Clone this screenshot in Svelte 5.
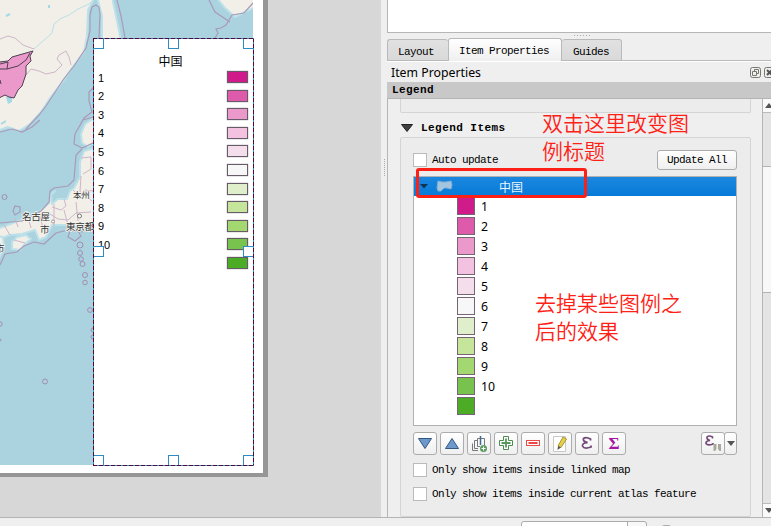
<script>
  const legend = [
    ['1', '#d01c8b'], ['2', '#de5aaa'], ['3', '#ea99ca'], ['4', '#f2c2e0'],
    ['5', '#f5deec'], ['6', '#f7f7f7'], ['7', '#dfeecb'], ['8', '#c5e69a'],
    ['9', '#a3d871'], ['10', '#78c34d'], ['', '#4dac26']
  ];
  const handles = [[0, 0], [75, 0], [150, 0], [0, 208], [150, 208], [0, 417], [75, 417], [150, 417]];
  const islets = [[80, 245, 3], [80, 253, 2.5], [81, 259, 2.3], [82.5, 264, 2.5], [85, 275, 2.5], [85, 282.5, 2.3], [90, 310, 2.4], [93, 330, 2], [93, 337, 2], [45, 381.5, 2.5], [4.5, 197, 2.5], [0, 324, 2.2], [0, 340, 1]];
  const tools = ['down', 'up', 'group', 'add', 'remove', 'edit', 'expr', 'sum'];
</script>

<div class="window">
  <div class="main">
    <section class="canvas">
      <div class="paper">
        <svg class="map" width="253" height="465" viewBox="0 0 253 465">
          <rect width="253" height="465" fill="#aad3df" />
          <g fill="#f2efe9" stroke="#bce1e9" stroke-width="2" stroke-linejoin="round">
            <path d="M-3-3H95L88 10 87 36 84 52 72 68 64 80 50 98 41 112 30 124 19 131 8 127-3 131Z" />
            <path d="M97-3H112L116 16 121 40H102L102 16Z" />
            <path d="M216-3H256V7L245 12 235 17 225 8Z" />
            <path d="M94 118L85 124 81 134 82 143 88 147 95 142Z" />
            <path d="M95 148L84 151 80 162 80 177 74 188 70 191 67 199 58 199 52 204 51 195 55 191 51 194 49 203 39 212 25 218 8 225-3 229V240L10 235 22 234 35 230 39 240 46 237 52 225 65 225 74 227 84 225 95 225Z" />
            <path d="M12 242L17 237 26 235 31 239 25 244 20 250 12 249Z" />
            <path d="M-3 236L3 237 4 245 0 257-3 260Z" />
          </g>
          <g fill="none" stroke="#a99ab8" stroke-width="1.2">
            <path d="M117 0L121 16 125 38M99 38L100 14 99 7 96 5 92 7 90 15 90 31 86 48 74 66 63 80 46 106 39 115 26 129" />
            <path d="M0 132L12 129 22 132 32 127 40 120M93 88L89 92 89 101 92 112 84 118 79 127M93 117L83 120 75 134 74 144 82 148 93 143M82 149L76 155 74 180 68 186 54 188 50 191 49 202 41 211 22 221 0 223M0 265L5 254 17 252 24 246 34 242 44 244 56 233 68 230 83 232" />
            <path d="M215 38L218 33 216 29 221 28 226 25 232 15 244 13 253 3M209 0L215 12 230 22M70 231L68 237 75 241 81 236 78 231M13 211L15 206 20 207 20 212 15 215Z" />
          </g>
          <g fill="none" stroke="#cdb6c8" stroke-width="1">
            <path d="M0 39L8 36 15 38 23 45 34 49M26 75L31 69 39 71 46 74 55 72 62 65 57 59 59 55 66 51 69 57 71 65" />
            <path d="M81 158L91 157 91 169 83 174M73 190L80 197 85 190 93 191M52 207L61 210 66 206 64 199M50 214L58 219 68 220 76 213 91 212M15 218L18 227M28 217L31 228M39 213L43 228M54 204L54 226M64 210L68 225M76 202L78 221M4 225L10 235M14 240L25 243M81 176L80 192 92 201" />
          </g>
          <path d="M95-1L89 4 78 9 69 15 60 19 54 24 52 33 43 41 34 49" fill="none" stroke="#bae0e6" />
          <path d="M6 16L10 14M49 5V8M1 124L6 121" stroke="#a5d9e5" stroke-width="2" />
          <path d="M6 97L12 96 12 102 8 104Z" fill="#a5d9e5" />
          <path d="M-1 62L8 61 12 57 33 51 30 56 31 61 26 66 26 74 22 86 18 90 14 98 9 97 5 95-1 98Z" fill="#ea99ca" stroke="#4d4050" />
          <path d="M0 64L8 62 7 69 18 66 26 60 30 53M0 69L7 69M0 80L1 84" fill="none" stroke="#4d4050" />
          <g fill="none" stroke="#a08fae">
            {#each islets as [x, y, r]}<circle cx={x} cy={y} {r} />{/each}
          </g>
          <circle cx="79.5" cy="216" r="2" fill="#fff" stroke="#777" />
          <circle cx="53" cy="221.500" r="1.500" fill="#fff" stroke="#999" />
          <g class="places"><text x="73" y="197.500" font-size="8.500">本州</text><text x="22" y="220">名古屋</text><text x="40" y="232.500">市</text><text x="66" y="230">東京都</text><text x="-5" y="252">市</text></g>
        </svg>
        <div class="map-legend">
          <h2>中国</h2>
          {#each legend as [label, color]}
            <div class="entry"><span>{label}</span><i style:background={color}></i></div>
          {/each}
          {#each handles as [x, y]}<b class="handle" style:left="{x}px" style:top="{y}px"></b>{/each}
          <div class="dashes"></div>
        </div>
      </div>
    </section>
    <div class="splitter"><span></span></div>
    <section class="dock">
      <div class="items-list"></div>
      <div class="grip"></div>
      <nav><span class="t1">Layout</span><span class="active">Item Properties</span><span class="t3">Guides</span></nav>
      <header>
        <span>Item Properties</span>
        <svg width="25" height="12" viewBox="0 0 25 12" fill="none" stroke="#777770"><rect x=".5" y=".5" width="10" height="10" rx="2" /><path d="M4.500 4.500V2.500H8.500V6.500H6.500M2.500 4.500H6.500V8.500H2.500Z" /><rect x="14.500" y=".5" width="10" height="10" rx="2" /><path d="M17 3L22 8M22 3L17 8" stroke="#555" stroke-width="2" /></svg>
      </header>
      <div class="section-title">Legend</div>
      <div class="scroll">
        <div class="content">
          <div class="prev-group"></div>
          <h3><svg width="12" height="8"><path d="M.5 .5H11.500L6 7.500Z" fill="#404040" stroke="#222" /></svg>Legend Items</h3>
          <div class="group">
            <div class="update"><label class="check"><i></i>Auto update</label><button>Update All</button></div>
            <div class="tree">
              <div class="selected">
                <svg class="caret" width="8" height="5"><path d="M0 0H8L4 4.500Z" fill="#0c3658" /></svg>
                <svg class="poly" width="17" height="13" viewBox="0 0 17 13"><path d="M2 1L6 2 10 2 15 1 16 5 15 9 11 8 8 8 5 11 2 11 1 8Z" fill="#a3c5df" stroke="#82b0d2" /></svg>
                <span>中国</span>
              </div>
              {#each legend as [label, color]}
                <div class="row"><i style:background={color}></i><span>{label}</span></div>
              {/each}
            </div>
            <div class="toolbar">
              {#each tools as tool}
                <button class="tool" aria-label={tool}>
                  <svg width="18" height="18" viewBox="0 0 18 18">
                    {#if tool === 'down'}<path d="M2.500 3.500H15.500L9 13.500Z" fill="#6c98cb" stroke="#34577f" />
                    {:else if tool === 'up'}<path d="M2.500 13.500H15.500L9 3.500Z" fill="#6c98cb" stroke="#34577f" />
                    {:else if tool === 'group'}<g fill="none" stroke="#777"><path d="M4.500 8V5.500H8M2.500 8.500V15.500H8M4.500 7.500V13.500H8M7.500 3.500H14.500V10M7.500 3.500V11.500H10" /></g><path d="M10.500 1V10" stroke="#3e6b91" stroke-width="1.500" /><circle cx="13.500" cy="13.500" r="3.500" fill="#5c9c63" /><path d="M13.500 11.500V15.500M11.500 13.500H15.500" stroke="#fff" />
                    {:else if tool === 'add'}<path d="M6.500 1.500H11.500V5.500H15.500V10.500H11.500V14.500H6.500V10.500H2.500V5.500H6.500Z" fill="#fff" stroke="#4b8d4e" /><path d="M9 3.500V12.500M4.500 8H13.500" stroke="#559858" stroke-width="1.800" />
                    {:else if tool === 'remove'}<rect x="2.500" y="5.500" width="13" height="5" fill="#fff" stroke="#e54b4b" /><path d="M4.500 8H13.500" stroke="#ee4545" stroke-width="2" />
                    {:else if tool === 'edit'}<path d="M2.500 1.500H14.500V16.500H2.500Z" fill="#fff" stroke="#c9c9c9" /><path d="M7 11L12 2 15.500 4 10 12.500Z" fill="#e8d04a" stroke="#a79532" /><path d="M7 11L6.500 15 10 12.500Z" fill="#555" />
                    {:else if tool === 'expr'}<path d="M12.500 5.500V4Q8 1.500 5.500 3.500 4.500 6.500 9.500 7.500 4 8 4.500 11 6 14.500 13 12V10.500" fill="none" stroke="#744979" stroke-width="1.800" />
                    {:else}<text x="3.500" y="14" class="sigma">Σ</text>{/if}
                  </svg>
                </button>
              {/each}
              <button class="tool filter" aria-label="filter"><svg width="18" height="18"><path d="M8.500 3.500V2Q5 0 3 2 2.500 4.500 6 5.500 1.500 6 2 8.500 3.500 11 9 9V8" fill="none" stroke="#744979" stroke-width="1.600" /><path d="M9.500 9H12.500V14L11 16H9.500ZM14 9H17V16H15.500L14 14Z" fill="#aaa89e" /></svg></button>
              <button class="tool more" aria-label="more"><svg width="8" height="5"><path d="M0 0H8L4 5Z" fill="#555" /></svg></button>
            </div>
            <label class="check linked"><i></i>Only show items inside linked map</label>
            <label class="check atlas"><i></i>Only show items inside current atlas feature</label>
          </div>
        </div>
        <div class="scrollbar">
          <span class="arrow"><svg width="8" height="5"><path d="M0 5H8L4 0Z" fill="#555" /></svg></span>
          <span class="thumb"></span>
          <span class="arrow bottom"><svg width="8" height="5"><path d="M0 0H8L4 5Z" fill="#555" /></svg></span>
        </div>
      </div>
    </section>
  </div>
  <footer><div class="combo"></div><i></i></footer>
  <div class="outline"></div>
  <p class="note first">双击这里改变图<br />例标题</p>
  <p class="note second">去掉某些图例之<br />后的效果</p>
</div>

<style>
  * { box-sizing: border-box; }
  .window { position: relative; width: 771px; height: 526px; overflow: hidden; background: #efefef; color: #000; font: 11px/14px "Liberation Mono", "Noto Sans CJK SC", monospace; letter-spacing: -.6px; }
  .main { display: flex; height: 517px; }
  .canvas { width: 381px; background: #d7d7d7; overflow: hidden; }
  .paper { position: relative; width: 268px; height: 477px; background: #fff; border: solid #969696; border-width: 0 5px 4px 0; }
  .map { display: block; }
  .places { font: 9.5px "Noto Sans CJK JP", sans-serif; fill: #333; stroke: #f5f3ef; stroke-width: 1.5px; paint-order: stroke; letter-spacing: -.3px; }
  .map-legend { position: absolute; left: 93px; top: 38px; width: 161px; height: 428px; padding: 12px 6px 0 5px; background: #fff; font-family: "Liberation Sans", sans-serif; letter-spacing: 0; }
  h2 { margin: 0 0 6px; padding-right: 5px; text-align: center; font: 12px/21px "Noto Sans CJK SC", sans-serif; height: 12px; }
  .entry { display: flex; justify-content: space-between; align-items: center; height: 18.55px; }
  .entry span { padding-top: 1px; }
  .entry i { width: 21px; height: 12px; border: 1px solid #665b66; box-shadow: 0 0 1px #777; }
  .handle { position: absolute; width: 11px; height: 11px; border: 1px solid #308bc3; background: #fff; }
  .dashes { position: absolute; inset: 0; background:
    repeating-linear-gradient(90deg, #5a0633 0 4px, #308bc3 4px 6px) 0 0 / 100% 1px no-repeat,
    repeating-linear-gradient(90deg, #5a0633 0 4px, #308bc3 4px 6px) 0 100% / 100% 1px no-repeat,
    repeating-linear-gradient(#5a0633 0 4px, #308bc3 4px 6px) 0 0 / 1px 100% no-repeat,
    repeating-linear-gradient(#5a0633 0 4px, #308bc3 4px 6px) 100% 0 / 1px 100% no-repeat; }
  .splitter { width: 6px; display: flex; align-items: center; padding-left: 3px; padding-bottom: 182px; }
  .splitter span { height: 17px; border-left: 1px dotted #aaa; }
  .dock { width: 384px; display: flex; flex-direction: column; }
  .items-list { height: 33px; background: #fff; border: solid #b6b6b6; border-width: 0 0 1px 1px; }
  .grip { height: 6px; width: 17px; margin-left: 187px; background: repeating-linear-gradient(90deg, #aaa 0 1px, transparent 1px 3px) 0 2px / 100% 1px no-repeat; }
  nav { display: flex; height: 23px; align-items: flex-end; border-bottom: 1px solid #fff; box-shadow: inset 0 -1px #b9b9b9; }
  nav span { height: 22px; padding: 5px 0 0 11px; border: 1px solid #b9b9b9; background: linear-gradient(#e1e1e1, #d9d9d9); border-radius: 3px 3px 0 0; white-space: nowrap; }
  nav .t1 { width: 61px; padding-left: 10px; border-right: 0; }
  nav .active { width: 114px; height: 23px; background: linear-gradient(#fff, #efefef); border-bottom: 0; padding-left: 10px; }
  nav .t3 { width: 60px; border-left: 0; }
  header { display: flex; justify-content: space-between; align-items: center; height: 20px; padding-left: 4px; font: 12.3px/20px "Noto Sans", sans-serif; letter-spacing: 0; overflow: hidden; }
  header span { padding-top: 2px; }
  header svg { margin: 1px -4px 0 0; }
  .section-title { height: 17px; padding: 1px 0 0 5px; background: #c8c8c8; border-bottom: 1px solid #b4b4b4; font-weight: bold; letter-spacing: .4px; }
  .scroll { display: flex; height: 418px; border-left: 1px solid #b6b6b6; }
  .content { width: 374px; padding-left: 12px; }
  .prev-group { width: 351px; height: 14px; border: solid #d4d4d4; border-width: 0 1px 1px; border-radius: 0 0 2px 2px; background: #ececec; }
  h3 { display: flex; gap: 8px; align-items: center; margin: 0; padding: 5px 0 0 1px; height: 24px; font-size: 11px; letter-spacing: .45px; }
  .group { width: 351px; height: 380px; border: 1px solid #d4d4d4; border-radius: 2px; padding: 0 13px 0 12px; background: #ececec; }
  .update { display: flex; justify-content: space-between; height: 38px; padding-top: 12px; }
  .check { display: flex; gap: 5px; align-items: center; height: 14px; white-space: nowrap; }
  .update .check { margin-top: 3px; }
  .check i { width: 14px; height: 14px; background: #fff; border: 1px solid #bbb; }
  button { font: inherit; letter-spacing: inherit; color: inherit; border: 1px solid #acacac; border-radius: 3px; background: linear-gradient(#fff, #efefef); padding: 0; }
  .update button { width: 80px; height: 20px; }
  .tree { width: 324px; height: 250px; border: 1px solid #b1b1b1; background: #fff; font: 12.3px/20px "Noto Sans", "Noto Sans CJK SC", sans-serif; letter-spacing: 0; }
  .selected { display: flex; align-items: center; height: 19px; background: linear-gradient(#1b87df, #067bd8); color: #eaf5ff; }
  .caret { margin-left: 6px; }
  .poly { margin-left: 8px; }
  .selected span { margin-left: 46px; font: 12px/17px "Noto Sans CJK SC", sans-serif; }
  .row { display: flex; gap: 6px; align-items: center; height: 20px; padding-left: 43px; }
  .row span { padding-top: 2px; }
  .row i { width: 18px; height: 18px; border: 1px solid #766474; }
  .toolbar { display: flex; gap: 3px; margin-top: 6px; height: 23px; }
  .tool { width: 24px; height: 23px; display: grid; place-items: center; }
  .filter { margin-left: 72px; }
  .more { width: 13px; margin-left: -4px; }
  .sigma { font: bold 17px "Liberation Serif", serif; fill: #a414a3; letter-spacing: 0; }
  .linked { margin-top: 8px; }
  .atlas { margin-top: 10px; }
  .scrollbar { width: 9px; flex: none; border-left: 1px solid #b4b4b4; background: #e4e4e4; display: flex; flex-direction: column; overflow: hidden; }
  .arrow { height: 14px; padding: 4px 0 0 2px; line-height: 5px; background: #fafafa; border-bottom: 1px solid #bbb; flex: none; }
  .arrow svg { display: block; }
  .thumb { height: 127px; margin-top: 53px; background: #f8f8f8; border: solid #b4b4b4; border-width: 1px 0; }
  .bottom { margin-top: auto; border: 0; border-top: 1px solid #bbb; }
  footer { display: flex; height: 9px; border-top: 1px solid #b4b4b4; padding: 3px 0 0 521px; gap: 13px; }
  .combo { width: 126px; height: 9px; border: 1px solid #acacac; border-radius: 3px 3px 0 0; background: linear-gradient(90deg, #fff 105px, #acacac 105px 106px, #f8f8f8 106px); }
  footer i { width: 13px; height: 5px; border-radius: 5px 5px 0 0; background: #aaa; margin-top: 4px; }
  .outline { position: absolute; left: 416px; top: 168px; width: 171px; height: 30px; border: 3px solid #fc2016; border-radius: 3px; }
  .note { position: absolute; margin: 0; color: #ff2116; font: 350 21px/28px "Noto Sans CJK SC", sans-serif; letter-spacing: 0; white-space: nowrap; }
  .first { left: 542px; top: 108px; }
  .second { left: 535px; top: 288px; }
</style>
